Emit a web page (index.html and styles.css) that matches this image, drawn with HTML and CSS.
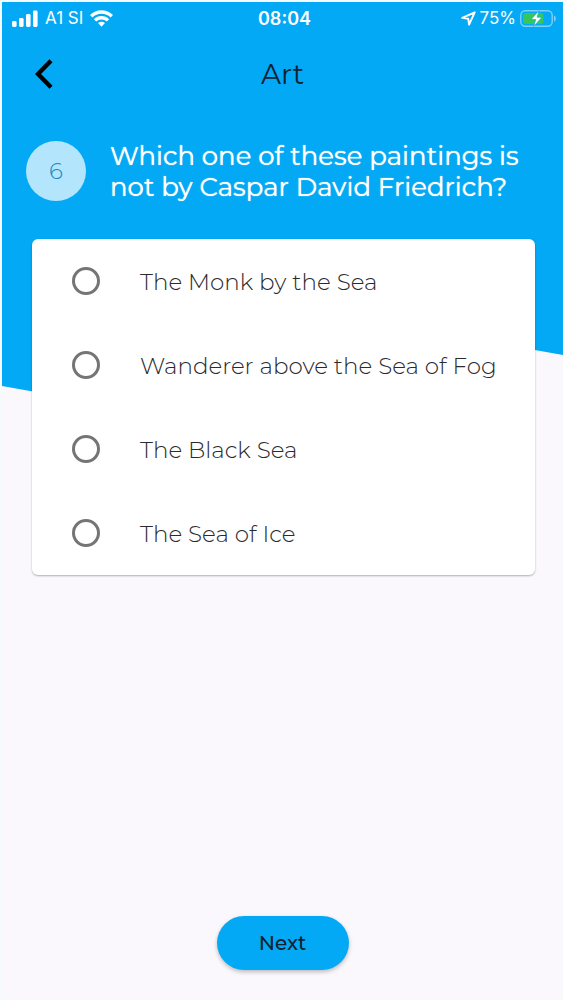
FILE: index.html
```html
<!DOCTYPE html>
<html lang="en">
<head>
<meta charset="utf-8">
<meta name="viewport" content="width=device-width, initial-scale=1">
<title>Art quiz</title>
<link rel="stylesheet" href="styles.css">
</head>
<body>
<div class="app">
  <div class="backdrop"></div>
  <div class="status">
    <div class="status-left">
      <svg width="26" height="17" viewBox="0 0 26 17" fill="currentColor" aria-hidden="true">
        <rect x="0" y="11" width="4.6" height="6" rx="1.4"/><rect x="7" y="8" width="4.6" height="9" rx="1.4"/><rect x="14" y="4" width="4.6" height="13" rx="1.4"/><rect x="21" y="0.5" width="4.6" height="16.5" rx="1.4"/>
      </svg>
      <span>A1 SI</span>
      <svg width="23" height="17" viewBox="0 0 23 17" aria-hidden="true">
        <g fill="none" stroke="currentColor" stroke-width="3.4"><path d="M1.2 6.2a14.6 14.6 0 0 1 20.6 0"/><path d="M5 10.4a9.2 9.2 0 0 1 13 0"/></g>
        <path fill="currentColor" d="M11.5 16.7l-3.5-3.6a5 5 0 0 1 7 0z"/>
      </svg>
    </div>
    <time class="clock">08:04</time>
    <div class="status-right">
      <svg width="15" height="15" viewBox="0 0 15 15" fill="none" stroke="currentColor" stroke-width="1.9" stroke-linejoin="round" aria-hidden="true"><path d="M13.7 1.3L1.2 6.9l6 .8.9 6z"/></svg>
      <span>75%</span>
      <svg width="37" height="19" viewBox="0 0 37 19" aria-hidden="true">
        <rect x="0.8" y="1.8" width="31.4" height="15.4" rx="4.5" fill="none" stroke="#7fd0f9" stroke-width="1.4"/>
        <rect x="3" y="4" width="20.5" height="11" rx="2.5" fill="#34c759"/>
        <path d="M34 6.5c2.4.6 2.4 5.4 0 6z" fill="#7fd0f9"/>
        <path d="M19 1.5L11 10.6h4.7L13.7 17.5 22 8.2h-4.8z" fill="#fff" stroke="#03a9f4" stroke-width=".7"/>
      </svg>
    </div>
  </div>
  <header class="bar">
    <button class="back" type="button" aria-label="Back">
      <svg width="18" height="30" viewBox="0 0 18 30" fill="none" stroke="currentColor" stroke-width="4.4" aria-hidden="true"><path d="M16 1.8L3 15l13 13.2"/></svg>
    </button>
    <h1 class="title">Art</h1>
  </header>
  <main class="main">
    <div class="question">
      <span class="number">6</span>
      <h2 class="prompt" id="prompt">Which one of these paintings is not by Caspar David Friedrich?</h2>
    </div>
    <div class="card" role="radiogroup" aria-labelledby="prompt">
      <label class="option"><input class="radio" type="radio" name="answer"><span>The Monk by the Sea</span></label>
      <label class="option"><input class="radio" type="radio" name="answer"><span>Wanderer above the Sea of Fog</span></label>
      <label class="option"><input class="radio" type="radio" name="answer"><span>The Black Sea</span></label>
      <label class="option"><input class="radio" type="radio" name="answer"><span>The Sea of Ice</span></label>
    </div>
  </main>
  <footer class="footer"><button class="next" type="button">Next</button></footer>
</div>
</body>
</html>
```
FILE: styles.css
```css
* { box-sizing: border-box; }

body {
  margin: 0;
  background: #fff;
  color: #2b2b2e;
  font-family: Montserrat, Inter, "Open Sans", sans-serif;
}

.app {
  position: relative;
  display: flex;
  flex-direction: column;
  min-height: 100vh;
  border-top: 2px solid #f3fbff;
  border-left: 2px solid #f3fbff;
  background: #faf8fc;
}

.backdrop {
  position: absolute;
  inset: 0 0 auto;
  height: 400px;
  background: #03a9f4;
  clip-path: polygon(0 0, 100% 0, 100% 353px, 90% 343px, 50% 400px, 10% 394px, 0 384px);
}

.status,
.bar,
.main,
.footer { position: relative; }

.status {
  display: grid;
  grid-template-columns: 1fr auto 1fr;
  align-items: center;
  height: 32px;
  padding: 0 6px 0 10px;
  color: #fff;
  font-family: Inter, Roboto, sans-serif;
  font-size: 17px;
}

.status-left,
.status-right {
  display: flex;
  align-items: center;
  gap: 7px;
}

.status-right {
  justify-content: flex-end;
  gap: 4px;
}

.clock {
  font-size: 18px;
  font-weight: 600;
}

.bar {
  display: grid;
  grid-template-columns: 84px 1fr 84px;
  align-items: center;
  height: 80px;
}

.back {
  display: flex;
  justify-content: center;
  padding: 8px;
  border: 0;
  background: none;
  color: #000;
}

.title {
  margin: 0;
  color: #10222e;
  font-size: 28px;
  font-weight: 400;
  text-align: center;
}

.main {
  padding: 25px 28px 0 24px;
}

.question {
  display: flex;
  align-items: center;
  gap: 24px;
}

.number {
  display: grid;
  flex: none;
  place-items: center;
  width: 60px;
  height: 60px;
  border-radius: 50%;
  background: #b3e5fc;
  color: #2489c0;
  font-size: 23px;
  font-weight: 300;
}

.prompt {
  margin: 0;
  padding-top: 2px;
  color: #fff;
  font-size: 26px;
  font-weight: 400;
  line-height: 31px;
  text-shadow: 0 0 1px #fff;
}

.card {
  margin: 36px 0 0 6px;
  border-radius: 6px;
  background: #fff;
  box-shadow: 0 1px 2px rgba(0, 0, 0, 0.3);
}

.option {
  display: flex;
  align-items: center;
  gap: 40px;
  height: 84px;
  padding-left: 40px;
  font-size: 23px;
  font-weight: 300;
}

.option span { padding-top: 2px; }

.radio {
  flex: none;
  width: 28px;
  height: 28px;
  margin: 0;
  appearance: none;
  border: 3px solid #757575;
  border-radius: 50%;
}

.radio:checked { background: radial-gradient(#03a9f4 50%, transparent 55%); }

.footer {
  display: flex;
  justify-content: center;
  margin-top: auto;
  padding: 30px;
}

.next {
  width: 132px;
  height: 54px;
  border: 0;
  border-radius: 27px;
  background: #03a9f4;
  box-shadow: 0 2px 4px rgba(0, 0, 0, 0.25);
  color: #10222e;
  font-family: inherit;
  font-size: 20px;
  font-weight: 500;
}
```
